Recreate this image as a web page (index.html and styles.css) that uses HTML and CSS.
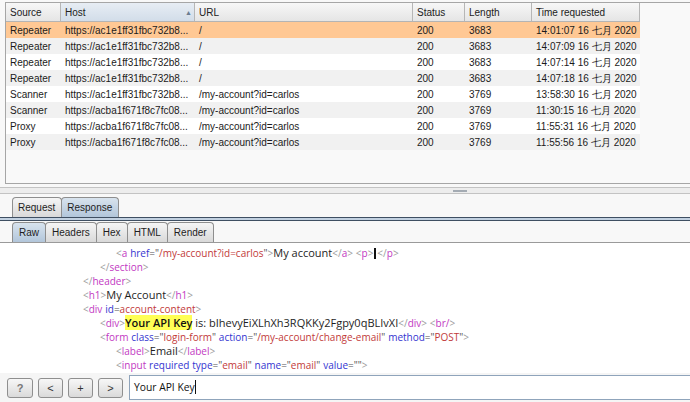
FILE: index.html
```html
<!DOCTYPE html>
<html>
<head>
<meta charset="utf-8">
<link rel="stylesheet" href="styles.css">
</head>
<body>
<div class="app">
  <div class="history">
    <div class="scroll">
      <div class="grid">
        <div class="row head">
          <div class="cell">Source</div>
          <div class="cell sorted">Host<span class="arrow">▲</span></div>
          <div class="cell">URL</div>
          <div class="cell">Status</div>
          <div class="cell">Length</div>
          <div class="cell">Time requested</div>
        </div>
        <div class="row sel"><div class="cell">Repeater</div><div class="cell">https://ac1e1ff31fbc732b8...</div><div class="cell">/</div><div class="cell">200</div><div class="cell">3683</div><div class="cell">14:01:07 16 七月 2020</div></div>
        <div class="row alt"><div class="cell">Repeater</div><div class="cell">https://ac1e1ff31fbc732b8...</div><div class="cell">/</div><div class="cell">200</div><div class="cell">3683</div><div class="cell">14:07:09 16 七月 2020</div></div>
        <div class="row"><div class="cell">Repeater</div><div class="cell">https://ac1e1ff31fbc732b8...</div><div class="cell">/</div><div class="cell">200</div><div class="cell">3683</div><div class="cell">14:07:14 16 七月 2020</div></div>
        <div class="row alt"><div class="cell">Repeater</div><div class="cell">https://ac1e1ff31fbc732b8...</div><div class="cell">/</div><div class="cell">200</div><div class="cell">3683</div><div class="cell">14:07:18 16 七月 2020</div></div>
        <div class="row"><div class="cell">Scanner</div><div class="cell">https://ac1e1ff31fbc732b8...</div><div class="cell">/my-account?id=carlos</div><div class="cell">200</div><div class="cell">3769</div><div class="cell">13:58:30 16 七月 2020</div></div>
        <div class="row alt"><div class="cell">Scanner</div><div class="cell">https://acba1f671f8c7fc08...</div><div class="cell">/my-account?id=carlos</div><div class="cell">200</div><div class="cell">3769</div><div class="cell">11:30:15 16 七月 2020</div></div>
        <div class="row"><div class="cell">Proxy</div><div class="cell">https://acba1f671f8c7fc08...</div><div class="cell">/my-account?id=carlos</div><div class="cell">200</div><div class="cell">3769</div><div class="cell">11:55:31 16 七月 2020</div></div>
        <div class="row alt"><div class="cell">Proxy</div><div class="cell">https://acba1f671f8c7fc08...</div><div class="cell">/my-account?id=carlos</div><div class="cell">200</div><div class="cell">3769</div><div class="cell">11:55:56 16 七月 2020</div></div>
      </div>
    </div>
  </div>
  <div class="splitter"><div class="bar"><div class="grip"></div></div></div>
  <div class="tabs top-tabs">
    <div class="tab">Request</div>
    <div class="tab active">Response</div>
  </div>
  <div class="band"></div>
  <div class="tabs sub-tabs">
    <div class="tab active">Raw</div>
    <div class="tab">Headers</div>
    <div class="tab">Hex</div>
    <div class="tab">HTML</div>
    <div class="tab">Render</div>
  </div>
  <div class="code">
    <div class="ln i2"><span class="b">&lt;</span><span class="t">a</span> <span class="an">href</span><span class="q">="</span><span class="v">/my-account?id=carlos</span><span class="q">"</span><span class="b">&gt;</span>My account<span class="b">&lt;/</span><span class="t">a</span><span class="b">&gt;</span> <span class="b">&lt;</span><span class="t">p</span><span class="b">&gt;</span><span class="caret"></span><span class="b">&lt;/</span><span class="t">p</span><span class="b">&gt;</span></div>
    <div class="ln i1"><span class="b">&lt;/</span><span class="t">section</span><span class="b">&gt;</span></div>
    <div class="ln i0"><span class="b">&lt;/</span><span class="t">header</span><span class="b">&gt;</span></div>
    <div class="ln i0"><span class="b">&lt;</span><span class="t">h1</span><span class="b">&gt;</span>My Account<span class="b">&lt;/</span><span class="t">h1</span><span class="b">&gt;</span></div>
    <div class="ln i0"><span class="b">&lt;</span><span class="t">div</span> <span class="an">id</span><span class="q">=</span><span class="v">account-content</span><span class="b">&gt;</span></div>
    <div class="ln i1"><span class="b">&lt;</span><span class="t">div</span><span class="b">&gt;</span><span class="hl">Your API Key</span> is: bIhevyEiXLhXh3RQKKy2Fgpy0qBLIvXI<span class="b">&lt;/</span><span class="t">div</span><span class="b">&gt;</span> <span class="b">&lt;</span><span class="t">br/</span><span class="b">&gt;</span></div>
    <div class="ln i1"><span class="b">&lt;</span><span class="t">form</span> <span class="an">class</span><span class="q">="</span><span class="v">login-form</span><span class="q">"</span> <span class="an">action</span><span class="q">="</span><span class="v">/my-account/change-email</span><span class="q">"</span> <span class="an">method</span><span class="q">="</span><span class="v">POST</span><span class="q">"</span><span class="b">&gt;</span></div>
    <div class="ln i2"><span class="b">&lt;</span><span class="t">label</span><span class="b">&gt;</span>Email<span class="b">&lt;/</span><span class="t">label</span><span class="b">&gt;</span></div>
    <div class="ln i2"><span class="b">&lt;</span><span class="t">input</span> <span class="an">required</span> <span class="an">type</span><span class="q">="</span><span class="v">email</span><span class="q">"</span> <span class="an">name</span><span class="q">="</span><span class="v">email</span><span class="q">"</span> <span class="an">value</span><span class="q">=""</span><span class="b">&gt;</span></div>
  </div>
  <div class="searchbar">
    <div class="btn q">?</div>
    <div class="btn">&lt;</div>
    <div class="btn">+</div>
    <div class="btn">&gt;</div>
    <div class="search">Your API Key<span class="caret2"></span></div>
  </div>
</div>
</body>
</html>
```

FILE: styles.css
```css
* { box-sizing: border-box; }
html, body { margin: 0; padding: 0; }
body {
  width: 690px;
  height: 402px;
  overflow: hidden;
  background: #f8f8f8;
  font-family: "Liberation Sans", Arial, sans-serif;
  font-size: 10px;
  color: #1b1b1b;
}
.app { display: flex; flex-direction: column; height: 402px; }

.history { padding-top: 2px; padding-left: 5px; height: 184px; flex: none; }
.scroll {
  height: 182px;
  border: 1px solid #a6a6a6;
  border-right: none;
  background: #f9f9f9;
  overflow: hidden;
}
.grid { width: 634px; }
.row {
  display: grid;
  grid-template-columns: 55px 134px 218px 52px 67px 108px;
  height: 16px;
  background: #ffffff;
}
.row.alt { background: #f1f1f1; }
.row.sel { background: #ffc894; }
.cell {
  padding-left: 4px;
  padding-top: 1px;
  line-height: 16px;
  white-space: nowrap;
  overflow: hidden;
}
.row.head { height: 19px; border-bottom: 1px solid #b4b4b4; background: none; }
.head .cell {
  line-height: 18px;
  padding-top: 1px;
  background: linear-gradient(#f7f7f7, #e5e5e5);
  border-right: 1px solid #b6b6b6;
  color: #222;
  display: flex;
  align-items: center;
}
.head .cell.sorted {
  background: linear-gradient(#e7edf4, #d2dde9);
  justify-content: space-between;
}
.arrow { font-size: 7px; color: #6b7c90; padding-right: 2px; }

.splitter { height: 13px; flex: none; padding-top: 3px; }
.bar {
  height: 7px;
  border-top: 1px solid #c3c3c3;
  border-bottom: 1px solid #c3c3c3;
  background: #ededed;
  padding-top: 2px;
}
.grip { margin-left: 453px; width: 14px; height: 2px; background: #a4abb3; }

.tabs { display: flex; padding-left: 12px; flex: none; height: 20px; }
.tab {
  height: 20px;
  line-height: 20px;
  padding: 0 6px 0 5px;
  border: 1px solid #8e8e8e;
  border-bottom: none;
  border-radius: 4px 4px 0 0;
  background: linear-gradient(#f5f5f5, #d9d9d9);
  color: #1e1e1e;
  margin-right: -1px;
}
.tab.active { background: linear-gradient(#d8e3ee, #b2c6da); }
.band {
  height: 4px;
  flex: none;
  border-top: 1px solid #3f4f62;
  border-bottom: 1px solid #3f4f62;
  background: #c2d1e1;
}
.sub-tabs { margin-top: 1px; border-bottom: 1px solid #9a9a9a; height: 21px; }
.sub-tabs .tab { padding: 0 6px; }

.code {
  flex: none;
  height: 130px;
  background: #ffffff;
  padding-top: 3px;
  font-family: "Open Sans", "DejaVu Sans", sans-serif;
  font-size: 11px;
  color: #1e1e1e;
  overflow: hidden;
}
.ln { height: 14px; line-height: 14px; white-space: pre; }
.i0 { padding-left: 83px; }
.i1 { padding-left: 100px; }
.i2 { padding-left: 116px; }
.b, .t, .an, .v, .q { font-size: 10px; }
.b { color: #9c9c9c; }
.t { color: #c238c2; }
.an { color: #3434d0; }
.v { color: #c23a3a; }
.q { color: #555; }
.hl { background: #ffff55; font-weight: 600; color: #111; }
.caret { display: inline-block; width: 2px; height: 11px; background: #111; vertical-align: -2px; margin: 0 1px; }

.searchbar {
  flex: 1;
  display: flex;
  align-items: flex-start;
  padding: 5px 0 0 7px;
  gap: 5px;
  background: #f5f5f5;
}
.btn {
  width: 25px;
  height: 20px;
  border: 1px solid #8f8f8f;
  border-radius: 3px;
  background: linear-gradient(#f7f7f7, #dadada);
  text-align: center;
  line-height: 18px;
  font-size: 11px;
  color: #333;
}
.btn.q { width: 26px; color: #777; font-weight: bold; }
.search {
  margin-left: 1px;
  margin-top: -3px;
  flex: 1;
  height: 25px;
  border: 1px solid #8fa4bb;
  border-right: none;
  background: #fff;
  font-family: "Open Sans", "DejaVu Sans", sans-serif;
  font-size: 10.3px;
  line-height: 23px;
  padding-left: 4px;
  color: #111;
}
.caret2 { display: inline-block; width: 1px; height: 14px; background: #111; vertical-align: -3px; }
```
